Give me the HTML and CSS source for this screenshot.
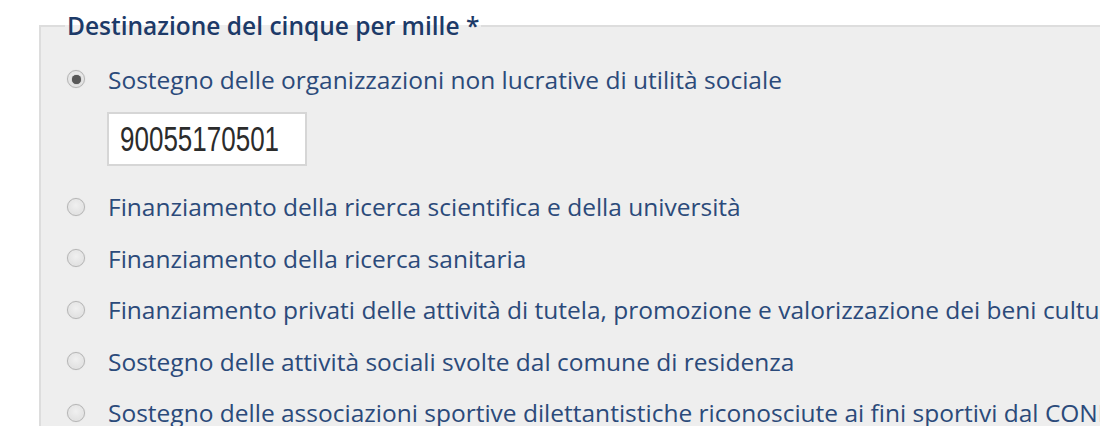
FILE: index.html
```html
<!DOCTYPE html>
<html lang="it">
<head>
  <meta charset="UTF-8" />
  <title>Cinque per mille</title>
  <link rel="stylesheet" href="styles.css">
</head>
<body>
  <fieldset class="destinazione">
    <legend>Destinazione del cinque per mille *</legend>
    <label class="option first">
      <input type="radio" name="dest" checked />
      <span class="radio"></span>
      <span class="text">Sostegno delle organizzazioni non lucrative di utilità sociale</span>
    </label>
    <div class="cf-box"><span class="cf">90055170501</span></div>
    <label class="option">
      <input type="radio" name="dest" />
      <span class="radio"></span>
      <span class="text">Finanziamento della ricerca scientifica e della università</span>
    </label>
    <label class="option">
      <input type="radio" name="dest" />
      <span class="radio"></span>
      <span class="text">Finanziamento della ricerca sanitaria</span>
    </label>
    <label class="option">
      <input type="radio" name="dest" />
      <span class="radio"></span>
      <span class="text">Finanziamento privati delle attività di tutela, promozione e valorizzazione dei beni culturali e paesaggistici</span>
    </label>
    <label class="option">
      <input type="radio" name="dest" />
      <span class="radio"></span>
      <span class="text">Sostegno delle attività sociali svolte dal comune di residenza</span>
    </label>
    <label class="option">
      <input type="radio" name="dest" />
      <span class="radio"></span>
      <span class="text">Sostegno delle associazioni sportive dilettantistiche riconosciute ai fini sportivi dal CONI a norma di legge</span>
    </label>
  </fieldset>
</body>
</html>
```

FILE: styles.css
```css
body {
  margin: 0;
  background: #fff;
  overflow: hidden;
  font-family: "Open Sans", sans-serif;
}
.destinazione {
  margin: 11px 0 0 39px;
  width: 1400px;
  padding: 0 0 20px 26px;
  background: #eeeeee;
  border: 2px solid #dddddd;
  border-right: none;
  white-space: nowrap;
}
.destinazione legend {
  padding: 0 2px;
  margin-left: -2px;
  font-size: 24.5px;
  font-weight: 600;
  color: #1d3a68;
  line-height: 30px;
}
.option {
  display: flex;
  align-items: center;
  height: 51.5px;
}
.option.first {
  height: 52px;
  margin-top: 12px;
}
.option input {
  display: none;
}
.radio {
  width: 16px;
  height: 16px;
  border-radius: 50%;
  border: 1px solid #b4b4b4;
  box-shadow: 0 0 1px #c8c8c8, inset 0 0 1px #f8f8f8;
  background: radial-gradient(circle at 50% 40%, #f0f0f0, #dcdcdc);
  margin: 0 23px 0 0;
  position: relative;
  flex: none;
}
.option input:checked + .radio::after {
  content: "";
  position: absolute;
  left: 3.5px;
  top: 3.5px;
  width: 9px;
  height: 9px;
  border-radius: 50%;
  background: #585858;
  box-shadow: 0 0 1px #585858;
}
.text {
  font-size: 24.5px;
  color: #2b4a7a;
}
.cf-box {
  margin: 7px 0 15px 40px;
  width: 196px;
  height: 50px;
  background: #fff;
  border: 2px solid #d6d6d6;
  display: flex;
  align-items: center;
}
.cf {
  display: inline-block;
  margin-left: 11px;
  font-family: "Liberation Sans", Arial, sans-serif;
  font-size: 26px;
  color: #2b2b2b;
  transform: scaleY(1.35);
  transform-origin: left center;
}
```
